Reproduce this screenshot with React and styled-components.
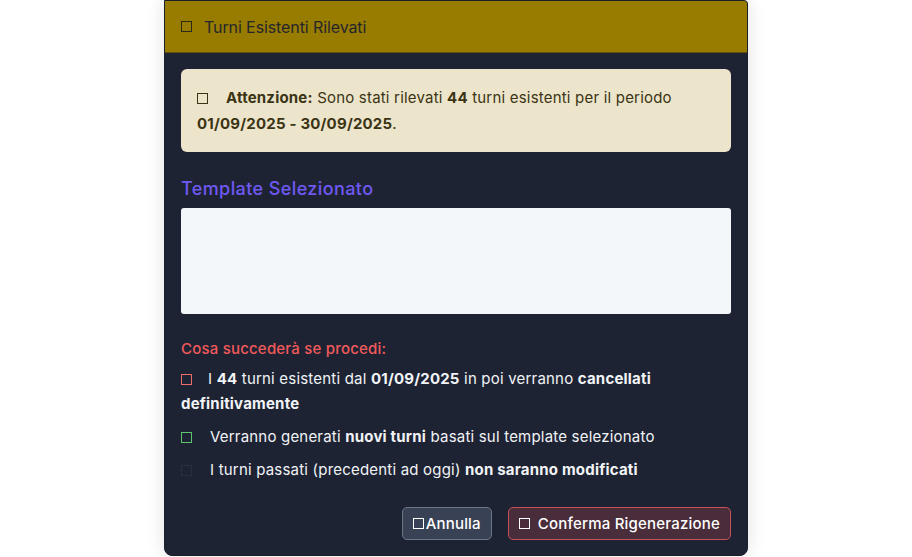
import React from "react";
import styled, { createGlobalStyle } from "styled-components";

const GlobalStyle = createGlobalStyle`
  html, body {
    margin: 0;
    padding: 0;
    background: #ffffff;
    font-family: Inter, "Noto Sans", sans-serif;
  }
`;

const items = [
  {
    color: "#ef6b6b",
    gap: 16,
    content: (
      <>
        I <b>44</b> turni esistenti dal <b>01/09/2025</b> in poi verranno{" "}
        <b>cancellati definitivamente</b>
      </>
    ),
  },
  {
    color: "#5fc36e",
    gap: 18,
    content: (
      <>
        Verranno generati <b>nuovi turni</b> basati sul template selezionato
      </>
    ),
  },
  {
    color: "#283040",
    gap: 18,
    content: (
      <>
        I turni passati (precedenti ad oggi) <b>non saranno modificati</b>
      </>
    ),
  },
];

const App = () => {
  return (
    <>
      <GlobalStyle />
      <Page>
        <Modal>
          <Header>
            <Box $color="#2b2a1a" $gap={12} />
            <HeaderTitle>Turni Esistenti Rilevati</HeaderTitle>
          </Header>
          <Body>
            <Warning>
              <Box $color="#3b3414" $gap={18} />
              <b>Attenzione:</b> Sono stati rilevati <b>44</b> turni esistenti per il
              periodo <b>01/09/2025 - 30/09/2025</b>.
            </Warning>

            <SectionTitle>Template Selezionato</SectionTitle>
            <TemplateBox />

            <Consequences>Cosa succederà se procedi:</Consequences>
            <List>
              {items.map((item, i) => (
                <Item key={i}>
                  <Box $color={item.color} $gap={item.gap} />
                  {item.content}
                </Item>
              ))}
            </List>

            <Footer>
              <Button $variant="secondary">
                <Box $color="#ffffff" $gap={2} />
                Annulla
              </Button>
              <Button $variant="danger">
                <Box $color="#ffffff" $gap={8} />
                Conferma Rigenerazione
              </Button>
            </Footer>
          </Body>
        </Modal>
      </Page>
    </>
  );
};

const Page = styled.div`
  width: 912px;
  height: 557px;
  display: flex;
  justify-content: center;
  overflow: hidden;
`;

const Modal = styled.div`
  width: 584px;
  height: 556px;
  box-sizing: border-box;
  background-color: #1e2334;
  border: 1px solid #1a1f2c;
  border-radius: 0 4px 8px 8px;
  box-shadow: 0 0 18px rgba(0, 0, 0, 0.12);
  overflow: hidden;
  display: flex;
  flex-direction: column;
`;

const Header = styled.div`
  height: 51px;
  flex-shrink: 0;
  display: flex;
  align-items: center;
  padding: 0 16px;
  background-color: #977c00;
  border-bottom: 1px solid #5e4f10;
`;

const HeaderTitle = styled.span`
  font-size: 16px;
  letter-spacing: -0.1px;
  color: #26262a;
`;

const Box = styled.span`
  display: inline-block;
  box-sizing: border-box;
  width: 11px;
  height: 11px;
  border: 1.5px solid ${(p) => p.$color};
  margin-right: ${(p) => p.$gap}px;
  vertical-align: -1px;
  flex-shrink: 0;
`;

const Body = styled.div`
  flex: 1;
  display: flex;
  flex-direction: column;
  padding: 16px 16px 15px;
  letter-spacing: 0.2px;
`;

const Warning = styled.div`
  background-color: #ece4cb;
  color: #3b3414;
  border-radius: 6px;
  padding: 16px 16px 15px;
  font-size: 15px;
  line-height: 26px;

  b {
    font-weight: 700;
  }
`;

const SectionTitle = styled.div`
  margin-top: 24px;
  font-size: 18px;
  font-weight: 500;
  letter-spacing: 0.4px;
  color: #7059f3;
  line-height: 26px;
`;

const TemplateBox = styled.div`
  margin-top: 6px;
  height: 106px;
  background-color: #f3f7fa;
  border-radius: 3px;
`;

const Consequences = styled.div`
  margin-top: 24px;
  font-size: 15px;
  font-weight: 500;
  color: #f05a5a;
  line-height: 22px;
`;

const List = styled.div`
  margin-top: 6px;
  display: flex;
  flex-direction: column;
  gap: 8px;
`;

const Item = styled.div`
  font-size: 15px;
  line-height: 25px;
  color: #f1f3f6;

  b {
    font-weight: 700;
  }
`;

const Footer = styled.div`
  margin-top: auto;
  display: flex;
  justify-content: flex-end;
  gap: 16px;
`;

const Button = styled.button`
  height: 33px;
  display: flex;
  align-items: center;
  padding: 0 10px;
  border-radius: 5px;
  font-family: Inter, "Noto Sans", sans-serif;
  font-size: 15px;
  font-weight: 500;
  letter-spacing: 0.2px;
  color: #ffffff;
  cursor: pointer;
  background-color: ${(p) => (p.$variant === "danger" ? "#4a2d3a" : "#394255")};
  border: 1px solid ${(p) => (p.$variant === "danger" ? "#c94f59" : "#6c7689")};
`;

export default App;
